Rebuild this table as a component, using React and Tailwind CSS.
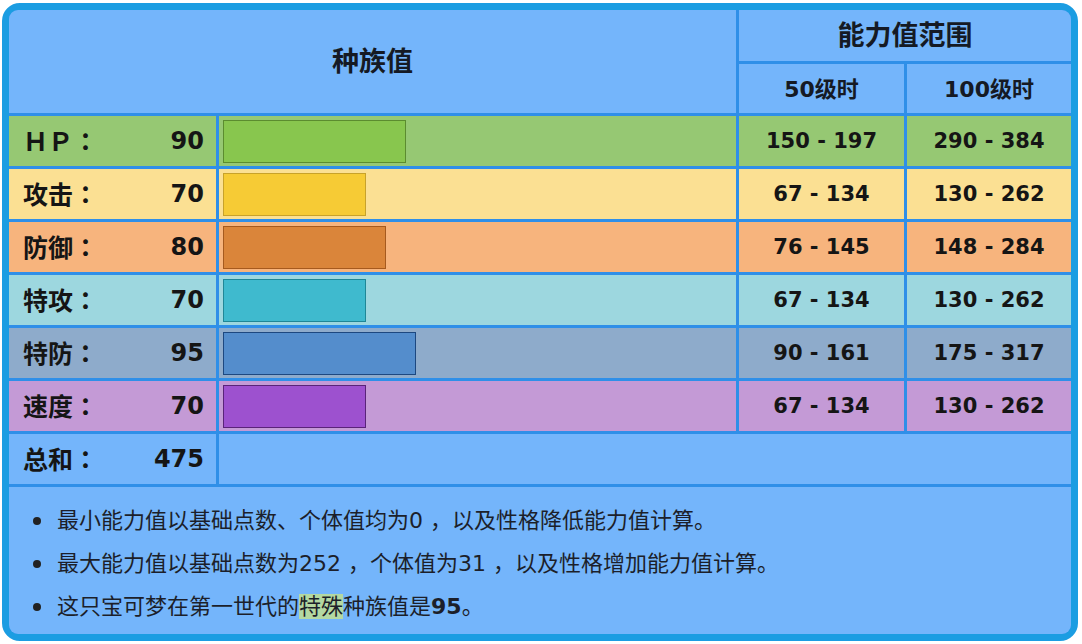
import React from "react";

const rows = [
  { label: "ＨＰ", v: 90, bg: "bg-[#96c873]", bar: "bg-[#88c64e] border-[#5b8c2f]", r50: "150 - 197", r100: "290 - 384" },
  { label: "攻击", v: 70, bg: "bg-[#fbe093]", bar: "bg-[#f6cb35] border-[#c8a22a]", r50: "67 - 134", r100: "130 - 262" },
  { label: "防御", v: 80, bg: "bg-[#f7b47d]", bar: "bg-[#da853a] border-[#a65a1e]", r50: "76 - 145", r100: "148 - 284" },
  { label: "特攻", v: 70, bg: "bg-[#9dd7df]", bar: "bg-[#3fbace] border-[#1f8797]", r50: "67 - 134", r100: "130 - 262" },
  { label: "特防", v: 95, bg: "bg-[#8eabcb]", bar: "bg-[#548dcc] border-[#1d4880]", r50: "90 - 161", r100: "175 - 317" },
  { label: "速度", v: 70, bg: "bg-[#c49ad6]", bar: "bg-[#9d51cf] border-[#5a2379]", r50: "67 - 134", r100: "130 - 262" },
];

const font = { fontFamily: '"DejaVu Sans", "Noto Sans CJK SC", sans-serif' };
const jp = { fontFamily: '"Noto Sans CJK JP", sans-serif' };

function LabelCell({ label, value, bg }) {
  return (
    <div className={`${bg} flex items-center justify-between pl-[14px] pr-[12px] text-[#151515] font-bold`}>
      <span className="text-[25px] leading-none">
        {label}
        <span style={jp}>：</span>
      </span>
      <span className="text-[24px] leading-none">{value}</span>
    </div>
  );
}

function Bullet({ children }) {
  return (
    <div className="flex items-center h-[43px]">
      <span className="w-[8px] h-[8px] rounded-full bg-[#222] mr-[16px] shrink-0" />
      <span>{children}</span>
    </div>
  );
}

export default function App() {
  return (
    <div className="w-[1082px] h-[644px] bg-white" style={font}>
      <div className="ml-[2px] mt-[3px] w-[1076px] h-[638px] rounded-[18px] border-[7px] border-[#1b9de2] bg-[#1b9de2]">
        <div className="w-[1062px] h-[624px] rounded-[9px] overflow-hidden bg-[#2f8fe8] grid gap-[3px] grid-cols-[207px_517px_165px_164px] grid-rows-[51px_49px_repeat(7,50px)_147px]">
          <div className="col-span-2 row-span-2 bg-[#74b5fb] flex items-center justify-center text-[27px] font-bold text-[#151a24] pt-[2px]">种族值</div>
          <div className="col-span-2 bg-[#74b5fb] flex items-center justify-center text-[27px] font-bold text-[#151a24] pt-[2px]">能力值范围</div>
          <div className="bg-[#74b5fb] flex items-center justify-center text-[22px] font-bold text-[#151a24] pt-[1px]">50级时</div>
          <div className="bg-[#74b5fb] flex items-center justify-center text-[22px] font-bold text-[#151a24] pt-[1px]">100级时</div>

          {rows.map((r) => (
            <React.Fragment key={r.label}>
              <LabelCell label={r.label} value={r.v} bg={r.bg} />
              <div className={`${r.bg} flex items-center pl-[4px]`}>
                <div className={`h-[43px] border ${r.bar}`} style={{ width: r.v * 2 + 3 }} />
              </div>
              <div className={`${r.bg} flex items-center justify-center text-[21px] font-bold text-[#151515] pt-[1px]`}>{r.r50}</div>
              <div className={`${r.bg} flex items-center justify-center text-[21px] font-bold text-[#151515] pt-[1px]`}>{r.r100}</div>
            </React.Fragment>
          ))}

          <LabelCell label="总和" value={475} bg="bg-[#74b5fb]" />
          <div className="col-span-3 bg-[#74b5fb]" />

          <div className="col-span-4 bg-[#74b5fb] pt-[12px] pl-[24px] text-[22px] text-[#1c1f2a]">
            <Bullet>最小能力值以基础点数、个体值均为0 ，以及性格降低能力值计算。</Bullet>
            <Bullet>最大能力值以基础点数为252 ，个体值为31 ，以及性格增加能力值计算。</Bullet>
            <Bullet>
              这只宝可梦在第一世代的<span className="bg-[#b4d8a2]">特殊</span>种族值是<b>95</b>。
            </Bullet>
          </div>
        </div>
      </div>
    </div>
  );
}
